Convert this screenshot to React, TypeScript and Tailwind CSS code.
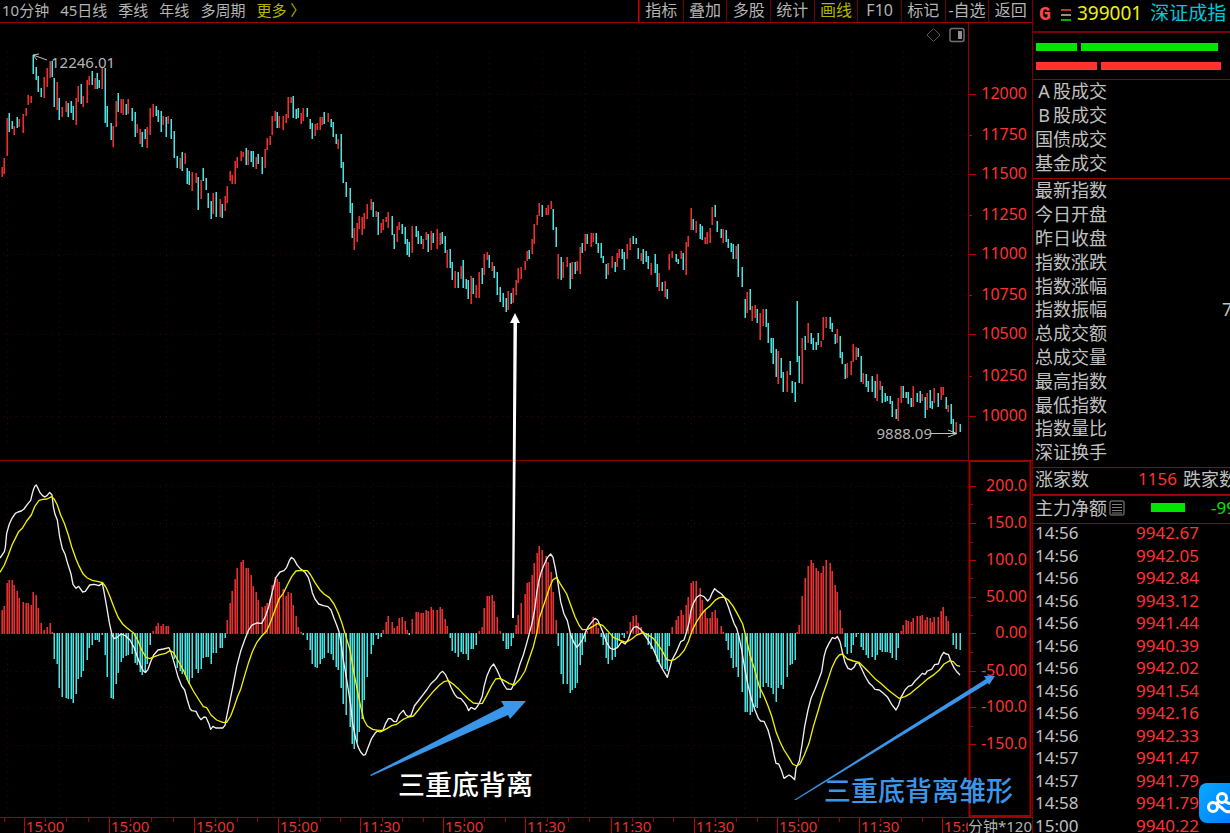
import { clsx } from 'clsx';

// [x, high, low, rising, macd bar end]
type Bar = [number, number, number, 0 | 1, number];

const BARS: Bar[] = [
  [2, 167, 177, 1, 610], [4, 158, 174, 1, 606], [7, 118, 156, 1, 583], [9, 113, 132, 0, 580],
  [12, 121, 129, 0, 580], [14, 126, 135, 1, 585], [17, 117, 128, 0, 591], [19, 119, 127, 1, 598],
  [23, 114, 133, 1, 602], [26, 108, 116, 1, 603], [28, 95, 105, 1, 603], [31, 96, 103, 1, 605],
  [33, 55, 74, 0, 592], [36, 67, 80, 0, 595], [38, 76, 92, 0, 608], [41, 88, 97, 0, 623],
  [44, 77, 98, 1, 630], [47, 68, 87, 1, 627], [50, 61, 78, 1, 623], [52, 61, 77, 0, 632],
  [54, 78, 107, 0, 659], [57, 82, 110, 1, 664], [59, 98, 120, 0, 688], [62, 107, 117, 1, 697],
  [66, 101, 112, 1, 698], [68, 103, 117, 0, 699], [71, 101, 113, 0, 699], [73, 106, 120, 0, 703],
  [76, 98, 125, 1, 694], [78, 86, 102, 1, 679], [81, 84, 104, 0, 677], [83, 96, 107, 1, 671],
  [87, 80, 103, 1, 660], [89, 76, 85, 1, 648], [92, 71, 85, 0, 645], [95, 78, 89, 1, 640],
  [97, 73, 89, 0, 640], [99, 80, 88, 0, 642], [102, 68, 89, 1, 635], [105, 68, 123, 0, 655],
  [107, 106, 127, 0, 677], [111, 123, 140, 0, 698], [113, 126, 147, 1, 699], [116, 101, 127, 1, 684],
  [118, 93, 112, 0, 673], [121, 99, 113, 1, 662], [123, 99, 115, 1, 658], [126, 104, 115, 0, 656],
  [128, 99, 114, 1, 655], [132, 108, 121, 0, 654], [135, 112, 137, 0, 663], [137, 124, 133, 1, 665],
  [140, 129, 144, 1, 672], [142, 132, 147, 0, 675], [145, 129, 139, 0, 673], [147, 127, 148, 1, 664],
  [150, 108, 135, 1, 645], [153, 104, 117, 1, 631], [156, 106, 116, 0, 626], [158, 110, 122, 0, 623],
  [161, 111, 132, 0, 626], [163, 116, 125, 1, 624], [166, 117, 137, 0, 626], [168, 116, 124, 1, 626],
  [171, 119, 139, 0, 633], [174, 131, 158, 0, 659], [177, 156, 168, 0, 668], [180, 158, 169, 1, 671],
  [182, 152, 171, 0, 674], [185, 153, 164, 1, 675], [187, 168, 184, 0, 680], [189, 171, 185, 0, 684],
  [192, 172, 191, 1, 678], [196, 173, 183, 1, 669], [198, 177, 210, 0, 673], [201, 180, 199, 1, 669],
  [203, 168, 181, 0, 658], [206, 178, 190, 0, 657], [208, 193, 208, 0, 657], [211, 201, 219, 0, 664],
  [213, 193, 214, 1, 653], [216, 192, 217, 0, 653], [220, 199, 217, 1, 648], [222, 204, 218, 0, 648],
  [225, 196, 211, 1, 638], [227, 186, 203, 1, 620], [230, 171, 181, 1, 603], [232, 175, 184, 1, 591],
  [235, 161, 184, 1, 579], [237, 157, 168, 1, 568], [241, 151, 161, 1, 562], [243, 152, 157, 1, 560],
  [246, 148, 165, 0, 568], [248, 150, 165, 1, 568], [251, 151, 162, 0, 575], [253, 151, 167, 0, 586],
  [256, 157, 169, 1, 592], [258, 154, 164, 0, 600], [262, 157, 174, 0, 607], [265, 149, 168, 1, 606],
  [267, 138, 150, 1, 603], [270, 136, 145, 1, 599], [272, 116, 135, 1, 585], [275, 111, 121, 1, 577],
  [277, 112, 128, 0, 579], [279, 116, 128, 1, 582], [283, 116, 130, 1, 589], [286, 114, 123, 1, 596],
  [288, 97, 118, 1, 592], [291, 97, 103, 1, 593], [293, 96, 118, 0, 605], [296, 109, 119, 0, 616],
  [298, 108, 118, 0, 627], [301, 113, 124, 1, 632], [303, 108, 121, 1, 635], [307, 108, 117, 0, 640],
  [310, 119, 129, 0, 650], [312, 123, 139, 0, 664], [315, 124, 136, 1, 667], [317, 123, 130, 1, 668],
  [320, 117, 130, 1, 664], [322, 117, 125, 1, 659], [324, 112, 124, 0, 658], [328, 113, 122, 1, 653],
  [331, 119, 127, 0, 654], [333, 122, 137, 0, 660], [336, 134, 144, 0, 667], [338, 139, 149, 1, 670],
  [341, 134, 168, 0, 688], [343, 162, 183, 0, 704], [346, 182, 197, 0, 715], [350, 188, 213, 0, 727],
  [352, 203, 238, 0, 744], [354, 228, 250, 1, 749], [357, 223, 242, 1, 742], [359, 216, 229, 1, 732],
  [362, 217, 235, 1, 719], [364, 213, 229, 1, 700], [367, 204, 219, 1, 677], [371, 199, 210, 1, 654],
  [373, 202, 217, 0, 645], [376, 211, 217, 1, 635], [378, 212, 235, 0, 639], [381, 223, 233, 1, 637],
  [383, 219, 230, 1, 630], [386, 217, 222, 1, 622], [388, 212, 228, 1, 616], [392, 216, 235, 0, 622],
  [394, 234, 249, 0, 628], [397, 226, 242, 1, 626], [399, 222, 230, 1, 618], [402, 224, 234, 0, 617],
  [405, 227, 244, 0, 621], [407, 239, 255, 0, 630], [409, 242, 257, 0, 635], [412, 226, 253, 1, 619],
  [416, 226, 237, 0, 612], [418, 231, 244, 0, 612], [421, 236, 244, 0, 613], [423, 239, 249, 1, 613],
  [426, 232, 240, 1, 610], [428, 234, 252, 0, 611], [431, 231, 250, 1, 607], [433, 233, 243, 0, 610],
  [437, 229, 249, 1, 610], [440, 233, 245, 1, 607], [442, 232, 244, 0, 609], [445, 236, 253, 0, 619],
  [447, 250, 268, 1, 626], [450, 249, 268, 0, 638], [452, 262, 280, 0, 651], [455, 271, 288, 1, 653],
  [458, 272, 288, 0, 657], [461, 266, 279, 1, 652], [463, 260, 288, 0, 654], [466, 279, 289, 0, 654],
  [468, 280, 299, 0, 660], [471, 276, 304, 1, 649], [473, 278, 294, 0, 649], [476, 285, 298, 1, 645],
  [479, 272, 298, 1, 631], [482, 268, 284, 0, 627], [484, 254, 275, 1, 608], [487, 252, 260, 1, 596],
  [489, 255, 268, 0, 596], [492, 262, 271, 1, 595], [494, 266, 278, 0, 601], [497, 272, 295, 0, 617],
  [500, 287, 302, 0, 631], [503, 293, 307, 0, 641], [506, 298, 312, 0, 649], [508, 291, 310, 1, 649],
  [511, 293, 304, 0, 646], [513, 288, 303, 1, 638], [516, 280, 295, 1, 625], [518, 268, 283, 1, 615],
  [521, 267, 279, 1, 603], [525, 261, 270, 1, 594], [527, 251, 261, 1, 583], [529, 250, 259, 0, 582],
  [532, 239, 254, 1, 575], [534, 224, 244, 1, 563], [537, 215, 225, 1, 553], [539, 203, 216, 1, 546],
  [542, 205, 217, 0, 550], [546, 208, 215, 1, 556], [548, 205, 215, 1, 562], [551, 201, 209, 1, 572],
  [553, 209, 230, 0, 592], [556, 227, 247, 0, 620], [558, 254, 279, 1, 646], [561, 257, 280, 0, 674],
  [563, 262, 278, 1, 684], [567, 257, 267, 1, 684], [570, 263, 289, 0, 693], [572, 262, 279, 1, 690],
  [575, 262, 274, 0, 688], [577, 261, 271, 1, 683], [580, 247, 274, 1, 665], [582, 243, 253, 0, 655],
  [585, 234, 251, 1, 642], [587, 234, 244, 0, 631], [591, 233, 247, 1, 626], [593, 233, 242, 1, 617],
  [596, 233, 244, 0, 622], [598, 243, 253, 0, 628], [601, 243, 258, 0, 637], [603, 256, 263, 0, 645],
  [606, 264, 279, 0, 658], [608, 263, 275, 1, 664], [612, 256, 268, 1, 660], [615, 262, 272, 0, 657],
  [617, 253, 267, 1, 647], [619, 249, 258, 1, 640], [622, 249, 259, 0, 635], [624, 252, 270, 0, 638],
  [627, 244, 259, 1, 631], [630, 238, 250, 1, 622], [633, 236, 244, 0, 616], [636, 238, 244, 0, 615],
  [638, 248, 259, 0, 623], [641, 253, 261, 1, 627], [643, 249, 264, 0, 631], [646, 251, 262, 0, 637],
  [648, 256, 269, 0, 645], [651, 263, 275, 1, 649], [655, 254, 273, 0, 653], [657, 264, 287, 0, 662],
  [659, 273, 291, 1, 664], [662, 282, 291, 0, 668], [665, 281, 297, 1, 669], [667, 289, 299, 0, 671],
  [669, 254, 270, 1, 646], [672, 251, 258, 1, 627], [676, 254, 262, 0, 620], [678, 259, 264, 0, 616],
  [681, 251, 259, 1, 610], [683, 253, 270, 0, 615], [686, 242, 275, 1, 605], [688, 236, 247, 1, 597],
  [691, 208, 230, 1, 583], [693, 219, 230, 0, 581], [696, 221, 233, 1, 581], [700, 224, 239, 0, 588],
  [702, 226, 240, 0, 600], [705, 237, 244, 1, 610], [707, 232, 244, 1, 618], [710, 228, 243, 1, 618],
  [712, 207, 225, 1, 612], [715, 205, 217, 0, 610], [717, 221, 232, 0, 618], [721, 229, 238, 0, 626],
  [723, 229, 243, 1, 632], [726, 230, 242, 0, 641], [728, 239, 248, 0, 650], [731, 243, 252, 0, 658],
  [733, 244, 259, 0, 668], [736, 246, 259, 1, 667], [738, 244, 277, 0, 677], [742, 267, 287, 0, 692],
  [745, 299, 318, 0, 712], [747, 292, 313, 1, 712], [750, 289, 310, 0, 715], [752, 306, 321, 1, 712],
  [755, 305, 318, 1, 707], [757, 309, 323, 0, 708], [760, 313, 340, 1, 698], [763, 309, 326, 1, 687],
  [766, 309, 327, 0, 683], [768, 323, 343, 0, 687], [771, 338, 353, 0, 688], [773, 338, 364, 0, 694],
  [776, 349, 377, 0, 702], [778, 351, 384, 1, 688], [781, 358, 378, 0, 685], [783, 372, 392, 0, 689],
  [787, 371, 392, 1, 677], [790, 361, 375, 0, 665], [792, 381, 393, 0, 664], [795, 382, 402, 0, 660],
  [797, 301, 362, 0, 632], [799, 356, 383, 0, 625], [802, 338, 384, 1, 596], [805, 336, 350, 0, 578],
  [808, 323, 343, 1, 566], [811, 333, 344, 0, 560], [813, 338, 350, 0, 563], [816, 342, 350, 0, 568],
  [818, 333, 345, 0, 571], [821, 341, 347, 1, 573], [823, 317, 340, 1, 566], [826, 317, 328, 1, 560],
  [830, 317, 329, 0, 563], [832, 323, 332, 0, 571], [835, 334, 344, 0, 585], [837, 329, 343, 1, 592],
  [840, 336, 358, 0, 610], [842, 352, 364, 0, 628], [845, 364, 379, 0, 647], [847, 363, 378, 1, 654],
  [851, 361, 375, 1, 653], [853, 344, 362, 1, 645], [856, 347, 360, 1, 637], [858, 348, 357, 0, 634],
  [861, 356, 382, 0, 647], [863, 373, 384, 1, 650], [866, 374, 387, 0, 655], [868, 381, 392, 0, 658],
  [872, 376, 392, 0, 657], [875, 381, 398, 0, 660], [877, 374, 401, 1, 655], [880, 381, 390, 1, 650],
  [882, 386, 403, 0, 652], [885, 393, 402, 0, 652], [887, 396, 401, 0, 652], [890, 396, 404, 0, 653],
  [892, 401, 417, 0, 658], [896, 409, 419, 0, 660], [898, 398, 421, 1, 648], [901, 386, 403, 1, 631],
  [903, 386, 398, 0, 625], [906, 392, 398, 0, 620], [908, 392, 404, 0, 621], [911, 398, 407, 0, 622],
  [913, 386, 407, 1, 618], [917, 393, 402, 0, 616], [920, 391, 403, 0, 616], [922, 394, 401, 1, 615],
  [925, 397, 418, 0, 620], [927, 393, 410, 1, 617], [930, 390, 408, 0, 618], [932, 401, 409, 0, 622],
  [934, 388, 403, 1, 617], [938, 393, 407, 0, 617], [941, 387, 400, 1, 611], [943, 387, 395, 1, 607],
  [946, 397, 409, 0, 616], [948, 405, 412, 1, 621], [951, 404, 424, 0, 633], [953, 419, 434, 0, 645],
  [956, 422, 434, 1, 649], [960, 424, 432, 0, 650],
];

// Indicator lines are kept at three units per pixel, measured from the top of their pane
const DIF =
  '0,294 13,275 16,262 20,220 28,192 36,175 46,160 54,156 64,153 72,147 82,133 92,121 97,100 101,87 105,78 109,75 114,85 120,98 127,106 134,111 141,107 149,97 156,105 160,140 165,163 172,180 179,230 187,266 195,282 202,307 213,342 219,373 228,385 236,379 248,396 256,394 269,375 283,373 297,377 307,370 312,395 320,440 328,488 336,525 343,536 353,531 363,522 376,527 390,540 402,562 412,590 420,612 430,633 437,637 444,628 452,605 461,585 474,570 490,567 507,563 513,577 523,610 533,647 545,678 554,690 562,720 570,746 576,752 588,754 596,770 603,779 612,771 618,772 627,792 632,808 639,799 647,804 668,804 675,796 680,770 690,722 700,672 710,620 722,574 735,537 745,512 755,496 770,489 785,490 796,470 806,440 817,395 828,352 840,336 852,332 860,322 868,302 874,292 882,298 892,316 903,328 915,337 925,352 931,372 937,398 945,417 956,432 970,437 984,440 993,450 1002,475 1010,495 1017,515 1023,550 1030,600 1037,640 1045,690 1052,735 1058,790 1067,835 1074,860 1082,876 1090,885 1096,884 1105,860 1115,835 1125,820 1132,813 1140,816 1148,813 1157,790 1165,776 1173,776 1182,785 1189,785 1198,764 1210,751 1217,764 1225,770 1233,766 1243,738 1257,720 1270,703 1280,690 1292,672 1308,657 1320,640 1328,634 1336,643 1345,662 1354,684 1364,703 1372,713 1383,716 1393,728 1400,738 1406,752 1413,742 1425,748 1433,738 1440,725 1447,708 1452,680 1461,647 1472,622 1481,612 1490,628 1502,655 1512,675 1520,687 1534,688 1540,675 1550,645 1560,612 1570,585 1580,550 1588,520 1596,490 1604,450 1610,400 1616,365 1624,335 1632,315 1642,293 1652,282 1659,292 1666,325 1674,370 1682,425 1692,462 1702,482 1712,525 1722,548 1731,562 1739,552 1747,540 1757,515 1765,500 1774,488 1785,475 1793,480 1802,500 1811,522 1820,548 1831,565 1842,568 1853,562 1865,545 1875,552 1885,538 1893,515 1901,502 1910,500 1922,508 1930,520 1944,540 1958,563 1970,590 1982,618 1995,640 2002,652 2008,630 2016,600 2028,578 2042,545 2052,540 2060,515 2068,485 2072,455 2080,430 2090,412 2100,405 2112,410 2123,423 2130,415 2136,400 2144,386 2154,395 2165,402 2175,415 2185,440 2195,470 2203,492 2210,505 2217,530 2225,570 2235,630 2245,680 2255,720 2265,750 2275,775 2282,783 2292,784 2304,810 2315,850 2322,885 2328,910 2336,912 2344,930 2352,955 2367,945 2375,950 2384,959 2388,925 2398,903 2406,855 2414,800 2424,750 2433,715 2445,688 2455,662 2465,635 2472,590 2478,568 2487,550 2497,533 2506,536 2512,529 2520,545 2528,580 2535,607 2544,625 2553,629 2562,622 2568,610 2576,608 2584,625 2595,648 2608,670 2618,679 2625,688 2638,690 2650,700 2663,712 2675,733 2688,750 2696,735 2703,712 2715,690 2725,679 2735,676 2745,663 2758,650 2767,640 2775,643 2782,633 2795,628 2804,614 2815,612 2823,590 2831,577 2838,582 2845,583 2853,605 2863,625 2872,637 2880,645';

const DEA =
  '0,337 13,315 25,285 36,255 46,235 56,215 68,203 80,183 94,165 104,140 117,121 128,118 141,117 155,110 163,118 172,135 182,165 193,190 205,225 215,260 228,297 238,320 250,343 262,354 277,361 295,365 308,368 318,382 330,410 343,445 355,473 368,492 382,505 400,518 413,540 425,570 438,592 450,596 463,590 480,584 497,580 510,572 520,577 533,600 550,630 565,665 580,693 597,720 610,740 620,743 633,765 650,780 668,787 680,787 692,768 702,742 712,712 722,688 733,650 745,610 757,575 770,548 785,528 800,513 812,485 825,450 838,415 850,400 862,375 875,350 888,333 905,331 922,332 932,345 945,368 960,390 972,402 988,413 1002,432 1015,460 1026,490 1035,520 1050,570 1062,640 1072,690 1082,740 1092,780 1102,798 1118,808 1135,811 1150,811 1162,805 1175,797 1190,793 1210,778 1225,771 1240,768 1255,750 1270,730 1285,712 1302,692 1318,676 1332,665 1346,662 1360,673 1375,686 1390,702 1405,717 1420,729 1435,731 1447,730 1460,706 1475,676 1487,657 1500,655 1513,662 1528,671 1543,675 1560,657 1575,633 1588,595 1600,560 1610,520 1618,475 1628,445 1638,415 1648,385 1658,360 1670,352 1680,370 1700,402 1712,435 1725,470 1738,497 1747,509 1763,508 1778,500 1792,491 1808,496 1825,515 1840,532 1857,540 1878,547 1895,537 1910,525 1930,518 1945,525 1960,535 1975,555 1988,575 2000,598 2012,602 2025,598 2038,588 2052,572 2065,545 2078,508 2090,485 2103,465 2115,450 2130,438 2145,421 2158,413 2172,411 2185,420 2200,440 2215,467 2228,492 2238,530 2250,585 2263,625 2278,680 2292,708 2303,735 2315,768 2328,815 2340,845 2352,870 2365,890 2378,912 2390,918 2400,912 2413,885 2427,850 2440,800 2455,750 2468,705 2482,665 2495,625 2508,597 2518,585 2527,582 2542,597 2560,603 2577,607 2592,622 2610,640 2627,658 2645,672 2662,688 2677,700 2697,715 2715,710 2732,700 2750,685 2768,670 2785,655 2803,643 2818,630 2832,612 2850,602 2860,605 2870,616 2880,619';

const GRID_X = [7, 59, 113, 166, 219, 272, 319, 373, 437, 489, 542, 584, 638, 691, 744, 797, 851, 903, 951];

const PRICE_LEVELS: [number, string][] = [
  [94, '12000'], [135, '11750'], [174, '11500'], [215, '11250'], [254, '11000'],
  [295, '10750'], [334, '10500'], [376, '10250'], [416, '10000'],
];

const MACD_LEVELS: [number, string][] = [
  [486, '200.0'], [523, '150.0'], [560, '100.0'], [597, '50.00'], [633, '0.00'],
  [671, '-50.00'], [707, '-100.0'], [744, '-150.0'],
];

const TIME_TICKS: [number, string][] = [
  [24, '15:00'], [109, '15:00'], [194, '15:00'], [278, '15:00'], [360, '11:30'], [443, '15:00'],
  [525, '11:30'], [611, '11:30'], [694, '11:30'], [777, '15:00'], [859, '11:30'], [942, '15:00'],
];

const MINOR_TICKS = [4, 45, 66, 88, 130, 151, 173, 215, 237, 257, 299, 320, 340, 382, 402, 423, 464, 484, 505, 547, 568, 589, 632, 653, 673, 715, 736, 757, 798, 818, 839, 880, 901, 922];

const PERIODS = ['10分钟', '45日线', '季线', '年线', '多周期'];
const TOOLS = ['指标', '叠加', '多股', '统计', '画线', 'F10', '标记', '-自选', '返回'];

const TURNOVER = ['A股成交', 'B股成交', '国债成交', '基金成交'];
const QUOTES: [string, string?][] = [
  ['最新指数'], ['今日开盘'], ['昨日收盘'], ['指数涨跌'], ['指数涨幅'], ['指数振幅', '7'],
  ['总成交额'], ['总成交量'], ['最高指数'], ['最低指数'], ['指数量比'], ['深证换手'],
];

const TRADES: [string, string][] = [
  ['14:56', '9942.67'], ['14:56', '9942.05'], ['14:56', '9942.84'], ['14:56', '9943.12'],
  ['14:56', '9941.44'], ['14:56', '9940.39'], ['14:56', '9942.02'], ['14:56', '9941.54'],
  ['14:56', '9942.16'], ['14:56', '9942.33'], ['14:57', '9941.47'], ['14:57', '9941.79'],
  ['14:58', '9941.79'], ['15:00', '9940.22'],
];

const ZERO = 633;

const candlePath = (rising: 0 | 1, shift: number) =>
  BARS.filter((b) => b[3] === rising)
    .map(([x, top, bottom]) => `M${x + shift} ${top}V${bottom}`)
    .join('');

const macdPath = (above: boolean, shift: number) =>
  BARS.filter((b) => b[4] < ZERO === above)
    .map(([x, , , , end]) => `M${x + shift} ${above ? ZERO + 1 : ZERO}V${end}`)
    .join('');

function BarPaths({ up, down }: { up: (shift: number) => string; down: (shift: number) => string }) {
  return (
    <g fill="none" strokeWidth="1">
      <path d={up(-0.5)} stroke="#8a1a1a" />
      <path d={up(0.5)} stroke="#e83030" />
      <path d={down(-0.5)} stroke="#1f7878" />
      <path d={down(0.5)} stroke="#4fe0e0" />
    </g>
  );
}

function Grid({ top, bottom, levels }: { top: number; bottom: number; levels: number[] }) {
  return (
    <g stroke="#420000" strokeWidth="1" strokeDasharray="1 5">
      {GRID_X.map((x) => (
        <line key={x} x1={x + 0.5} x2={x + 0.5} y1={top} y2={bottom} />
      ))}
      {levels.map((y) => (
        <line key={y} x1="4" x2="967" y1={y + 0.5} y2={y + 0.5} />
      ))}
    </g>
  );
}

function Scale({ levels, allMajor }: { levels: [number, string][]; allMajor?: boolean }) {
  return (
    <>
      {levels.map(([y, label], i) => (
        <g key={label}>
          <line
            x1="969"
            x2={allMajor || i % 2 === 0 ? 976 : 972}
            y1={y + 0.5}
            y2={y + 0.5}
            stroke="#b40000"
          />
          <text x="1027" y={y + 5} textAnchor="end" fontSize="16" fill="#ff3232">
            {label}
          </text>
        </g>
      ))}
    </>
  );
}

function PriceChart() {
  return (
    <svg viewBox="0 23 1032 437" className="block w-full" role="img" aria-label="399001 深证成指">
      <Grid top={51} bottom={442} levels={[94, 174, 254, 334, 416]} />
      <BarPaths up={(s) => candlePath(1, s)} down={(s) => candlePath(0, s)} />
      <path d="M968.5 23V460" stroke="#960000" />
      <Scale levels={PRICE_LEVELS} />

      <g stroke="#c0c0c0" fill="none">
        <path d="M47 60L33 55M39 54L33 55L37 60" />
        <path d="M930 433.500H956M948 430L957 433.500L948 437" />
      </g>
      <text x="51" y="68" fontSize="15" fill="#b4b4b4">12246.01</text>
      <text x="932" y="439" fontSize="15" textAnchor="end" fill="#b4b4b4">9888.09</text>

      <path d="M933.500 28.500L940 35L933.500 41.500L927 35Z" fill="none" stroke="#585858" strokeWidth="1" />
      <rect x="950" y="28.500" width="14" height="13" rx="2" fill="none" stroke="#707070" strokeWidth="1.500" />
      <rect x="958" y="31" width="4" height="8" fill="#909090" />
    </svg>
  );
}

function MacdChart() {
  return (
    <svg viewBox="0 460 1032 357" className="block w-full" role="img" aria-label="MACD">
      <Grid top={484} bottom={816} levels={[486, 523, 560, 597, 671, 707, 745]} />
      <BarPaths up={(s) => macdPath(true, s)} down={(s) => macdPath(false, s)} />
      <g transform="translate(0 460) scale(0.333333)" fill="none" strokeWidth="4" strokeLinejoin="round">
        <polyline points={DIF} stroke="#f0f0f0" />
        <polyline points={DEA} stroke="#f0f000" />
      </g>
      <path d="M0 460.500H1032" stroke="#8c0000" />
      <rect x="969.500" y="461" width="61" height="355" fill="none" stroke="#a00000" strokeWidth="2" />
      <Scale levels={MACD_LEVELS} allMajor />
      <path
        d="M970 504.500h3M970 542.500h3M970 578.500h3M970 615.500h3M970 652.500h3M970 688.500h3M970 726.500h3"
        stroke="#a00000"
      />
    </svg>
  );
}

function Annotations() {
  return (
    <svg viewBox="0 23 1032 794" className="pointer-events-none absolute inset-x-0 top-0 w-full">
      <path d="M512 618L513.500 323L510 323L515 313L520 323L517 323L514 618Z" fill="#fff" />
      <path d="M370 775L504 706L501 701L526 701L510 719L508 715L371 776Z" fill="#3a96e8" />
      <path d="M794 800L986 679L984 676L995 676L989 685L988 683L796 800Z" fill="#3a96e8" />
      <text x="398" y="795" fontSize="27" fontWeight="500" fill="#fff">三重底背离</text>
      <text x="824" y="801" fontSize="27" fontWeight="500" fill="#3a96e8">三重底背离雏形</text>
    </svg>
  );
}

function TimeAxis() {
  return (
    <div className="flex h-4 border-t border-[#a00000]">
      <svg viewBox="0 0 1032 16" className="block h-4 w-full flex-none" role="img" aria-label="时间">
        {MINOR_TICKS.map((x) => (
          <path key={x} d={`M${x + 0.5} 0V4`} stroke="#a00000" />
        ))}
        {TIME_TICKS.map(([x, label]) => (
          <g key={x}>
            <path d={`M${x + 0.5} 0V16`} stroke="#c80000" />
            <text x={x + 2} y="14" fontSize="15" fill="#e83030">
              {label}
            </text>
          </g>
        ))}
        <rect x="968" y="0" width="64" height="16" fill="#000" />
        <text x="968" y="14" fontSize="15" fill="#b4b4b4">分钟*120</text>
      </svg>
    </div>
  );
}

function Toolbar() {
  return (
    <nav className="flex h-[23px] justify-between border-b border-[#a00000] leading-[18px] text-[#b4b4b4]">
      <div className="flex gap-[11px] pb-0.5 pl-0.5 text-[15px] whitespace-nowrap">
        {PERIODS.map((name) => (
          <button key={name} type="button">
            {name}
          </button>
        ))}
        <button type="button" className="text-[#b4b400]">
          更多 〉
        </button>
      </div>
      <div className="grid w-[394px] flex-none grid-cols-9 border-l border-[#c80000] text-base leading-[18px]">
        {TOOLS.map((name) => (
          <button
            key={name}
            type="button"
            className={clsx(
              'border-l border-[#6e0000] pb-0.5 text-center whitespace-nowrap',
              name === '画线' && 'text-[#b4b400]'
            )}
          >
            {name}
          </button>
        ))}
      </div>
    </nav>
  );
}

function QuotePanel() {
  return (
    <aside className="w-[198px] flex-none overflow-hidden border-l border-[#780000] text-lg leading-[22px] whitespace-nowrap text-[#c0c0c0]">
      <header className="flex h-[33px] items-center border-b-2 border-[#780000] pb-1.5 pl-1.5">
        <span className="w-4 pt-1 font-['Liberation_Mono'] text-[20px] font-bold text-[#ff4646]">G</span>
        <span className="ml-1.5 flex w-[10px] flex-col gap-[3px] pt-1">
          <i className="h-0.5 bg-[#c03030]" />
          <i className="h-0.5 bg-[#909090]" />
          <i className="h-0.5 bg-[#00b400]" />
        </span>
        <span className="ml-[6px] text-[19px] text-[#f0f000]">399001</span>
        <span className="ml-2 text-[19px] text-[#00c8dc]">深证成指</span>
      </header>

      <div className="flex h-[47px] flex-col gap-[11px] border-b border-[#a00000] pt-[10px] pl-[3px]">
        <div className="flex gap-1">
          <span className="h-2 w-[41px] bg-[#00e600]" />
          <span className="h-2 w-[137px] bg-[#00e600]" />
        </div>
        <div className="flex gap-1">
          <span className="h-2 w-[61px] bg-[#ff3232]" />
          <span className="h-2 w-[120px] bg-[#ff3232]" />
        </div>
      </div>

      <ul className="border-b border-[#a00000] pb-0.5 pl-0.5">
        {TURNOVER.map((name) => (
          <li key={name} className="h-6">
            <span className="inline-block w-[18px] text-center">{name[0]}</span>
            {name.slice(1)}
          </li>
        ))}
      </ul>

      <ul className="border-b border-[#a00000] pb-0.5 pl-0.5">
        {QUOTES.map(([name, value]) => (
          <li key={name} className="flex h-6 nth-[5n]:h-[23px]">
            <span className="w-[187px] flex-none">{name}</span>
            <span>{value}</span>
          </li>
        ))}
      </ul>

      <div className="flex h-7 items-center border-b-2 border-[#a00000] pb-1 pl-0.5">
        <span className="w-[103px] flex-none">涨家数</span>
        <span className="w-[45px] flex-none text-[17px] text-[#ff3232]">1156</span>
        <span>跌家数</span>
      </div>

      <div className="flex h-7 items-center border-b border-[#a00000] pb-1 pl-0.5">
        <span>主力净额</span>
        <svg viewBox="0 0 16 16" className="ml-0.5 size-4 flex-none" aria-hidden="true">
          <rect x="1" y="1" width="14" height="14" rx="2" fill="none" stroke="#606060" strokeWidth="1.500" />
          <path d="M3 4.500H13M3 7.500H13M3 10.500H13M3 13H13" stroke="#808080" />
        </svg>
        <span className="ml-[26px] h-[9px] w-[34px] flex-none bg-[#00e600]" />
        <span className="ml-[26px] text-[17px] text-[#00e600]">-99</span>
      </div>

      <table className="ml-0.5 text-[17px]">
        <tbody>
          {TRADES.map(([time, price], i) => (
            <tr key={i} className="h-[22px] align-top odd:h-[23px]">
              <td className="w-[101px] p-0 leading-[18px]">{time}</td>
              <td className="p-0 leading-[18px] text-[#ff3232]">{price}</td>
            </tr>
          ))}
        </tbody>
      </table>
    </aside>
  );
}

export default function App() {
  return (
    <div className="relative flex h-screen overflow-hidden bg-black font-['Noto_Sans','Noto_Sans_CJK_SC',sans-serif]">
      <main className="min-w-0 flex-1">
        <Toolbar />
        <div className="relative">
          <PriceChart />
          <MacdChart />
          <Annotations />
        </div>
        <TimeAxis />
      </main>
      <QuotePanel />

      <button
        type="button"
        aria-label="网盘"
        className="absolute right-0 bottom-[10px] h-10 w-[31px] overflow-hidden rounded-l-lg bg-linear-to-br from-[#10a8ff] to-[#0080ff]"
      >
        <svg viewBox="0 0 31 40" className="h-10 w-[31px]" fill="none" stroke="#fff" strokeWidth="3">
          <circle cx="23" cy="15" r="4.500" />
          <circle cx="14" cy="24" r="4.500" />
          <path d="M17 20.500L20 18.500M26 18.500L31 21" />
          <path d="M18 21L24 26C26 29 29 29.500 33 28" />
        </svg>
      </button>
    </div>
  );
}
